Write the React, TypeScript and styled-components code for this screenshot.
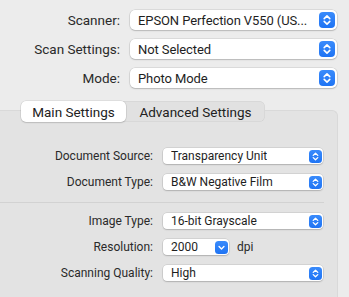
import React from "react";
import styled, { createGlobalStyle } from "styled-components";

const GlobalStyle = createGlobalStyle`
  html, body { margin: 0; padding: 0; }
  body {
    background: #ececec;
    font-family: Roboto, "Noto Sans", "Liberation Sans", sans-serif;
    color: #262626;
    -webkit-font-smoothing: antialiased;
    overflow: hidden;
  }
`;

const Page = styled.div`
  width: 349px;
  height: 297px;
  overflow: hidden;
`;

const TopForm = styled.div`
  display: grid;
  grid-template-columns: 120px 207px;
  column-gap: 10px;
  row-gap: 9px;
  padding-top: 10px;
  align-items: center;
`;

const Label = styled.div<{ $small?: boolean }>`
  text-align: right;
  font-size: ${(p) => (p.$small ? "12px" : "13.5px")};
  color: #2a2a2a;
  white-space: nowrap;
`;

const Popup = styled.div<{ $small?: boolean; $width?: number }>`
  height: ${(p) => (p.$small ? "16px" : "20px")};
  width: ${(p) => (p.$width ? `${p.$width}px` : "auto")};
  box-sizing: border-box;
  background: #ffffff;
  border-radius: ${(p) => (p.$small ? "4px" : "5px")};
  box-shadow: 0 0 0 0.5px rgba(0, 0, 0, 0.14), 0 1px 1.5px rgba(0, 0, 0, 0.16);
  display: flex;
  align-items: center;
  justify-content: space-between;
  padding-left: 8px;
  padding-right: ${(p) => (p.$small ? "1.5px" : "2px")};
  font-size: ${(p) => (p.$small ? "12px" : "13px")};
  letter-spacing: ${(p) => (p.$small ? "0" : "-0.1px")};
  color: #1e1e1e;
  white-space: nowrap;
  overflow: hidden;
`;

const PopupText = styled.span`
  overflow: hidden;
  margin-right: 2px;
`;

const Stepper = styled.div<{ $small?: boolean }>`
  flex: none;
  width: ${(p) => (p.$small ? "13px" : "16px")};
  height: ${(p) => (p.$small ? "13px" : "16px")};
  border-radius: ${(p) => (p.$small ? "3.5px" : "4px")};
  background: linear-gradient(#3a8bfb, #1f74f4);
  display: flex;
  align-items: center;
  justify-content: center;
`;

const TabArea = styled.div`
  margin-top: 13px;
  padding-left: 21px;
  position: relative;
  z-index: 1;
  height: 21px;
`;

const TabBar = styled.div`
  display: inline-flex;
  height: 21px;
  box-sizing: border-box;
  background: #e1e1e1;
  border-radius: 6px;
  box-shadow: inset 0 0 0 0.5px rgba(0, 0, 0, 0.08);
`;

const Tab = styled.div<{ $active?: boolean; $width: number }>`
  width: ${(p) => p.$width}px;
  height: 21px;
  box-sizing: border-box;
  display: flex;
  align-items: center;
  justify-content: center;
  font-size: 13.5px;
  color: #222;
  border-radius: 5px;
  background: ${(p) => (p.$active ? "#ffffff" : "transparent")};
  box-shadow: ${(p) =>
    p.$active ? "0 0 0 0.5px rgba(0,0,0,0.12), 0 1px 1.5px rgba(0,0,0,0.12)" : "none"};
`;

const Panel = styled.div`
  margin-top: -12px;
  width: 338px;
  height: 200px;
  box-sizing: border-box;
  background: #e3e3e3;
  border-top: 1px solid #d9d9d9;
  border-right: 1px solid #d9d9d9;
  border-top-right-radius: 6px;
  padding-top: 37px;
`;

const PanelForm = styled.div`
  display: grid;
  grid-template-columns: 153px 160px;
  column-gap: 10px;
  row-gap: 10px;
  align-items: center;
`;

const Divider = styled.div`
  width: 324px;
  height: 1px;
  background: #d2d2d2;
  margin: 12px 0 10px;
`;

const InlineField = styled.div`
  display: flex;
  align-items: center;
  gap: 8px;
  font-size: 12px;
  color: #2a2a2a;
`;

const UpDown = ({ size }: { size: number }) => (
  <svg width={size} height={size} viewBox="0 0 16 16">
    <path
      d="M5.2 6.6 L8 3.9 L10.8 6.6 M5.2 9.4 L8 12.1 L10.8 9.4"
      fill="none"
      stroke="#fff"
      strokeWidth="1.6"
      strokeLinecap="round"
      strokeLinejoin="round"
    />
  </svg>
);

const Down = ({ size }: { size: number }) => (
  <svg width={size} height={size} viewBox="0 0 16 16">
    <path
      d="M5 6.8 L8 9.8 L11 6.8"
      fill="none"
      stroke="#fff"
      strokeWidth="1.7"
      strokeLinecap="round"
      strokeLinejoin="round"
    />
  </svg>
);

const Select = ({
  value,
  small,
  width,
  down,
}: {
  value: string;
  small?: boolean;
  width?: number;
  down?: boolean;
}) => (
  <Popup $small={small} $width={width}>
    <PopupText>{value}</PopupText>
    <Stepper $small={small}>
      {down ? <Down size={small ? 13 : 16} /> : <UpDown size={small ? 13 : 16} />}
    </Stepper>
  </Popup>
);

export default function App() {
  return (
    <Page>
      <GlobalStyle />
      <TopForm>
        <Label>Scanner:</Label>
        <Select value="EPSON Perfection V550 (US..." />
        <Label>Scan Settings:</Label>
        <Select value="Not Selected" />
        <Label>Mode:</Label>
        <Select value="Photo Mode" />
      </TopForm>
      <TabArea>
        <TabBar>
          <Tab $active $width={105}>Main Settings</Tab>
          <Tab $width={139}>Advanced Settings</Tab>
        </TabBar>
      </TabArea>
      <Panel>
        <PanelForm>
          <Label $small>Document Source:</Label>
          <Select small value="Transparency Unit" />
          <Label $small>Document Type:</Label>
          <Select small value="B&W Negative Film" />
        </PanelForm>
        <Divider />
        <PanelForm>
          <Label $small>Image Type:</Label>
          <Select small value="16-bit Grayscale" />
          <Label $small>Resolution:</Label>
          <InlineField>
            <Select small down width={66} value="2000" />
            dpi
          </InlineField>
          <Label $small>Scanning Quality:</Label>
          <Select small value="High" />
        </PanelForm>
      </Panel>
    </Page>
  );
}
